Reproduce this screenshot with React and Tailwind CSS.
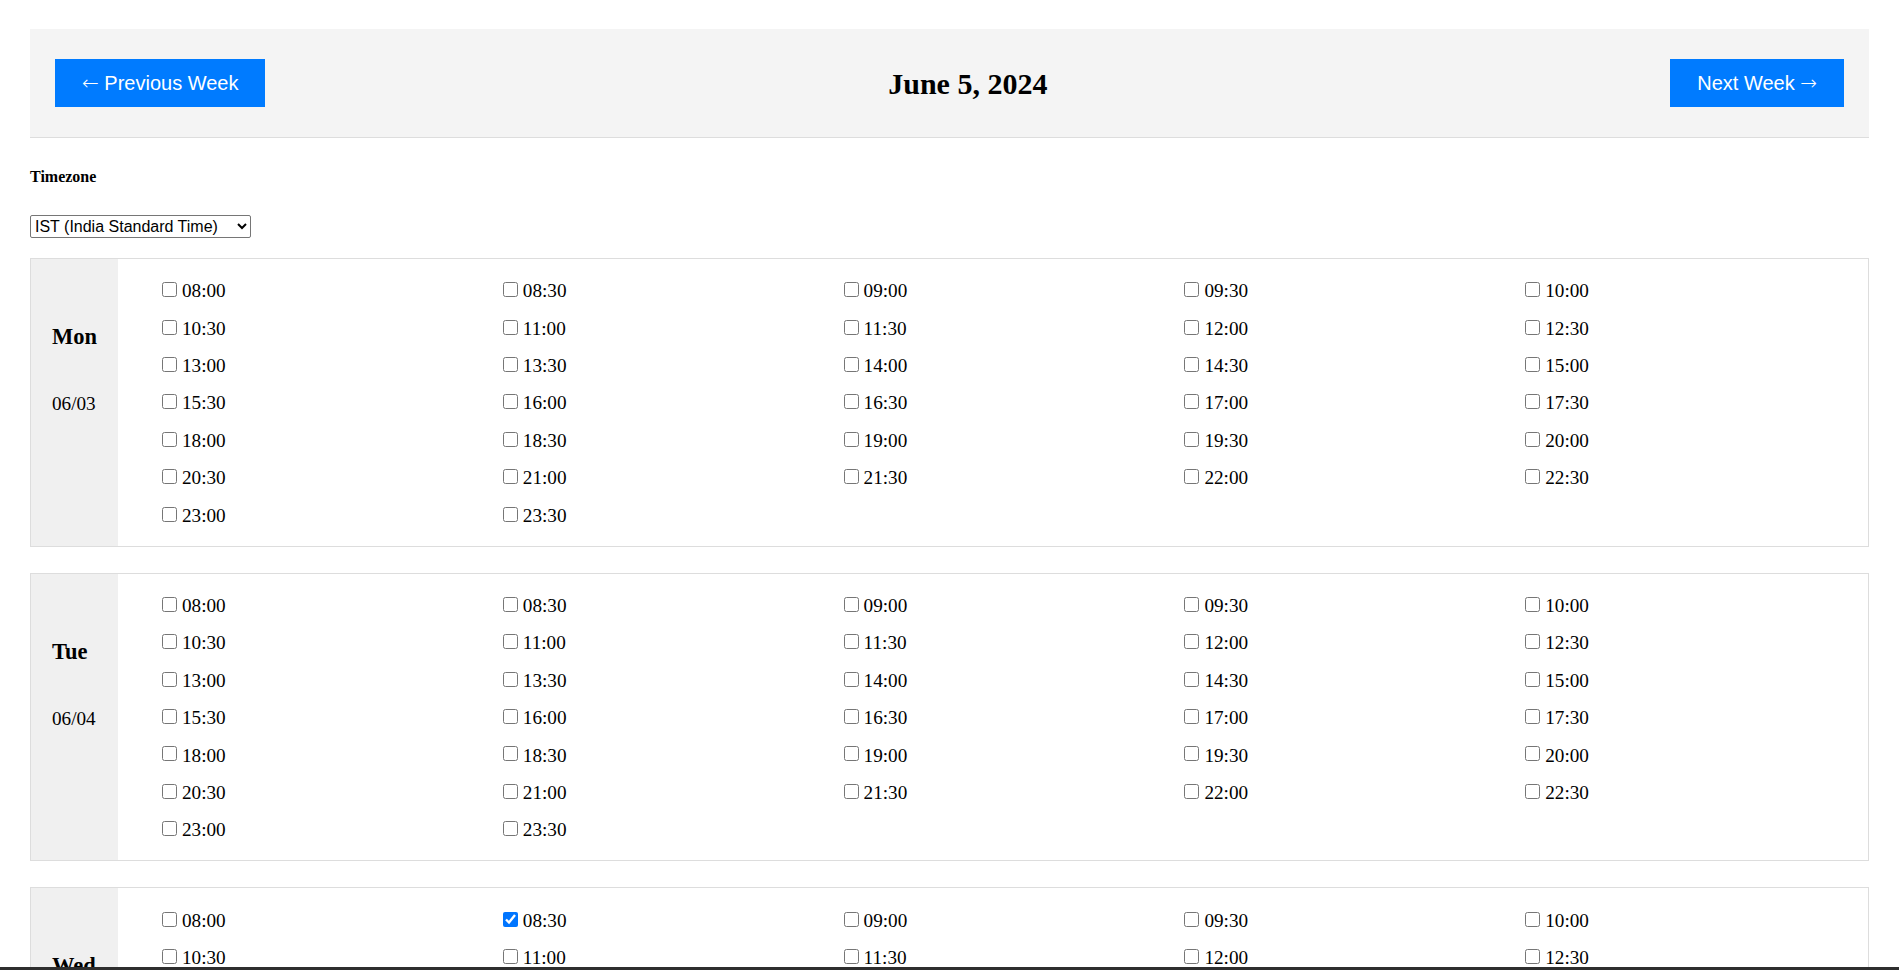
import React, { useState } from 'react';

const SLOTS = [];
for (let h = 8; h < 24; h++) {
  const hh = String(h).padStart(2, '0');
  SLOTS.push(`${hh}:00`, `${hh}:30`);
}

const DAYS = [
  { name: 'Mon', date: '06/03' },
  { name: 'Tue', date: '06/04' },
  { name: 'Wed', date: '06/05' },
  { name: 'Thu', date: '06/06' },
  { name: 'Fri', date: '06/07' },
  { name: 'Sat', date: '06/08' },
  { name: 'Sun', date: '06/09' },
];

const DayRow = ({ day, selected, onToggle }) => (
  <div className="flex border border-[#dddddd] bg-white">
    {/* day label */}
    <div className="w-[87px] shrink-0 bg-[#f0f0f0] pl-[21px] pt-[65px]">
      <h3 className="text-[22.5px] leading-[26px] font-bold text-black">{day.name}</h3>
      <p className="mt-[43px] text-[19.2px] leading-[22px] text-black">{day.date}</p>
    </div>

    {/* time slots */}
    <div className="flex-1 grid grid-cols-5 pl-[39px] pr-[7px] pt-[14px] pb-[11px]">
      {SLOTS.map(slot => {
        const key = `${day.date}-${slot}`;
        return (
          <label key={slot} className="h-[37.4px] flex items-center text-[19.2px] text-black cursor-pointer">
            <input
              type="checkbox"
              checked={!!selected[key]}
              onChange={() => onToggle(key)}
              className="w-[15px] h-[15px] ml-[5px] mr-[5px] mb-[4px] m-0"
            />
            {slot}
          </label>
        );
      })}
    </div>
  </div>
);

export default function App() {
  const [timezone, setTimezone] = useState('IST');
  const [selected, setSelected] = useState({ '06/05-08:30': true });

  const toggle = (key) => setSelected(s => ({ ...s, [key]: !s[key] }));

  return (
    <div className="min-h-screen bg-white pt-[29px] px-[30px] pb-[30px] font-['Liberation_Serif',serif]">
      {/* HEADER */}
      <div className="flex items-center justify-between bg-[#f4f4f4] border-b border-[#dddddd] h-[109px] px-[25px]">
        <button className="h-[48px] px-[27px] bg-[#007bff] text-white text-[20px] font-['Liberation_Sans',Arial,sans-serif]">
          <span className="font-['DejaVu_Sans',sans-serif] font-extralight">←</span> Previous Week
        </button>
        <h2 className="text-[30px] font-bold text-black">June 5, 2024</h2>
        <button className="h-[48px] px-[27px] bg-[#007bff] text-white text-[20px] font-['Liberation_Sans',Arial,sans-serif]">
          Next Week <span className="font-['DejaVu_Sans',sans-serif] font-extralight">→</span>
        </button>
      </div>

      {/* TIMEZONE */}
      <h5 className="mt-[30px] text-[16px] leading-[18px] font-bold text-black">Timezone</h5>
      <select
        value={timezone}
        onChange={(e) => setTimezone(e.target.value)}
        className="mt-[29px] h-[23px] w-[221px] border border-[#767676] rounded-[2px] bg-white text-[16px] text-black font-['Liberation_Sans',Arial,sans-serif]"
      >
        <option value="IST">IST (India Standard Time)</option>
        <option value="UTC">UTC (Coordinated Universal Time)</option>
        <option value="PST">PST (Pacific Standard Time)</option>
        <option value="EST">EST (Eastern Standard Time)</option>
      </select>

      {/* WEEK */}
      <div className="mt-[19px] flex flex-col gap-[26px]">
        {DAYS.map(day => (
          <DayRow key={day.name} day={day} selected={selected} onToggle={toggle} />
        ))}
      </div>

      <div className="fixed bottom-0 left-0 right-0 h-[3px] bg-[#2e2e2e]" />
    </div>
  );
}
